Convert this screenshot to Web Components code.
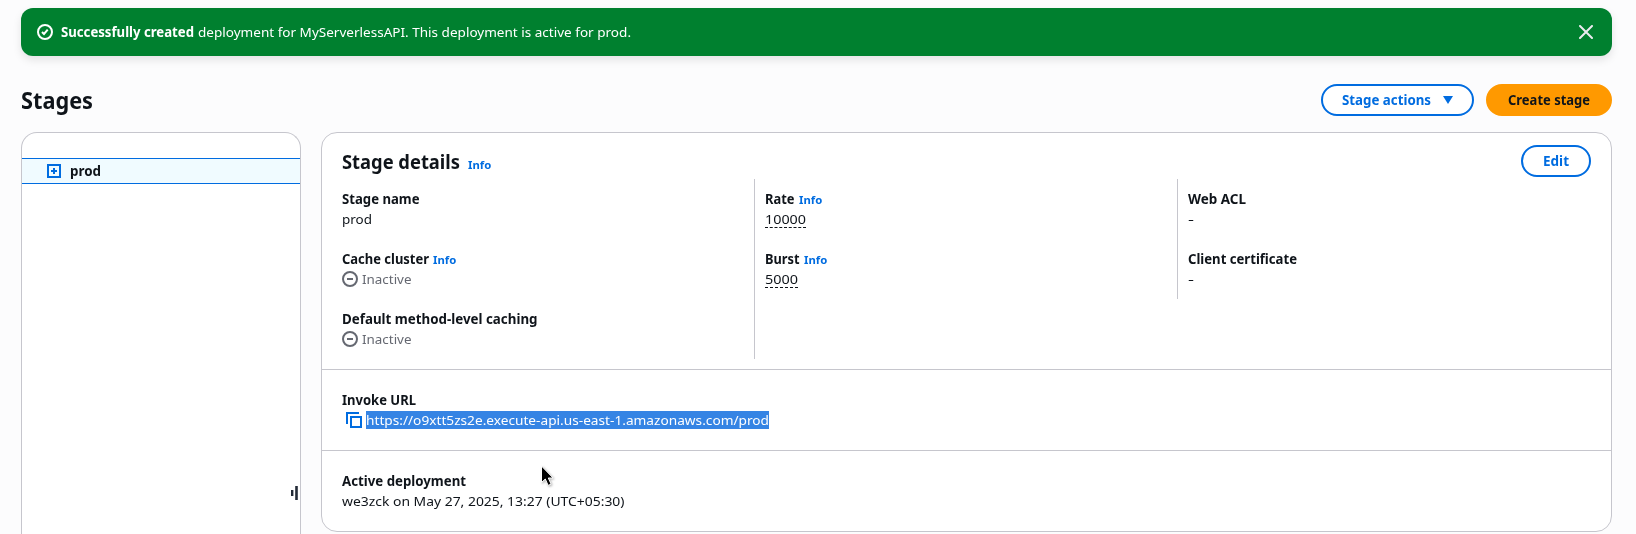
<!DOCTYPE html>
<html lang="en"><head><meta charset="utf-8"><title>Stages</title>
<style>
html,body{height:100%}
body{margin:0;background:#fcfcfd;overflow:hidden;font:13.3px/20px "Noto Sans","Open Sans",sans-serif;color:#0f141a}
</style></head><body><stages-page></stages-page>
<script>
const define=(name,html,after)=>customElements.define(name,class extends HTMLElement{
  constructor(){super();this.attachShadow({mode:'open'}).innerHTML=html;}
  connectedCallback(){if(after)after(this);}
});

/* One line of text; "w" is its advance width, reached by widening the glyphs. */
define('ui-text',`<style>:host{display:inline-block;white-space:nowrap}:host([b]){font-weight:700}span{display:inline-block;transform-origin:0 50%}</style><span><slot></slot></span>`,el=>{
  const w=+el.getAttribute('w');
  if(!w)return;
  const s=el.shadowRoot.querySelector('span');
  const natural=s.getBoundingClientRect().width;
  el.style.width=w+'px';
  s.style.transform='scaleX('+(w/natural).toFixed(4)+')';
});

define('info-link',`<style>:host{display:inline-block;font-size:11.3px;font-weight:700;color:#006ce0}</style><ui-text w="23.2">Info</ui-text>`);

define('ui-button',`<style>
:host{display:inline-flex;box-sizing:border-box;height:32px;border:2px solid #006ce0;border-radius:20px;padding:0 20px;align-items:center;color:#006ce0;background:#fff;font-weight:700}
:host([primary]){background:#f90;border-color:#f90;color:#0f141a}</style><slot></slot>`);

define('flash-bar',`<style>
:host{display:flex;align-items:center;box-sizing:border-box;height:48px;padding:0 19px 0 16px;border-radius:12px;background:#00802f;color:#fff;box-shadow:0 4px 8px rgba(0,7,22,.1)}
.msg{margin-left:8px;flex:1;display:flex;gap:4px}svg{display:block}</style>
<svg width="16" height="16" viewBox="0 0 16 16" fill="none" stroke="#fff" stroke-width="2"><circle cx="8" cy="8" r="7"/><path d="m5 8 2 2 3.7-4.3"/></svg>
<div class="msg"><ui-text b w="133">Successfully created</ui-text><ui-text w="433">deployment for MyServerlessAPI. This deployment is active for prod.</ui-text></div>
<svg width="14" height="14" viewBox="0 0 14 14" fill="none" stroke="#ebebf0" stroke-width="2" stroke-linecap="round"><path d="m1 1 12 12M13 1 1 13"/></svg>`);

define('page-header',`<style>
:host{display:flex;align-items:center;height:32px}
h1{margin:0;flex:1;font-size:23.5px;line-height:30px}
.actions{display:flex;gap:12px}
svg{margin-left:12px}</style>
<h1><ui-text w="72">Stages</ui-text></h1>
<div class="actions"><ui-button style="padding:0 19px"><ui-text w="89">Stage actions</ui-text><svg width="10" height="8" viewBox="0 0 10 8"><path d="M0 0h10L5 8z" fill="#006ce0"/></svg></ui-button><ui-button primary><ui-text w="82">Create stage</ui-text></ui-button></div>`);

define('stage-tree',`<style>
:host{display:flex;flex-direction:column;position:relative;box-sizing:border-box;border:1px solid #c6c6cd;border-bottom:0;border-radius:16px 16px 0 0;background:#fff;padding-top:25px}
.row{display:flex;align-items:center;gap:9px;box-sizing:border-box;height:26px;padding-left:25px;border:solid #006ce0;border-width:1px 0;background:#f0fbff}
.handle{position:absolute;right:1px;top:352px}svg{display:block}</style>
<div class="row"><svg width="14" height="14" viewBox="0 0 14 14" fill="none" stroke="#006ce0" stroke-width="2"><path d="M1 1h12v12H1zM7 4v6M4 7h6"/></svg><ui-text b w="31">prod</ui-text></div>
<svg class="handle" width="8" height="16" viewBox="0 0 8 16" fill="#232b37"><path d="M0 5h2.400v6H0zM4.200 1h2.600v14H4.200z"/></svg>`);

define('status-inactive',`<style>:host{display:flex;align-items:center;gap:4px;color:#656871}</style>
<svg width="16" height="16" viewBox="0 0 16 16" fill="none" stroke="#656871" stroke-width="2"><circle cx="8" cy="8" r="7"/><path d="M5 8h6"/></svg><ui-text w="49.5">Inactive</ui-text>`);

define('key-value',`<style>:host{display:block;height:40px}.k{display:flex;gap:4px;font-weight:700;height:20px;align-items:baseline}.v{display:flex;height:20px}</style>
<div class="k"><slot name="key"></slot></div><div class="v"><slot></slot></div>`);

define('stage-details',`<style>
:host{display:block;box-sizing:border-box;border:1px solid #c6c6cd;border-radius:16px;background:#fff}
header{display:flex;align-items:center;padding:12px 20px 0;height:32px}
h2{margin:0;padding-top:5px;flex:1;font-size:19.7px;line-height:24px;display:flex;gap:8px;align-items:baseline}
.cols{display:grid;grid-template-columns:412px 423px 1fr;align-items:start;padding:2px 20px 10px}
.col{display:flex;flex-direction:column;gap:20px;padding:10px 0 10px 10px;border-left:1px solid #c6c6cd}
.col:first-child{border:0;padding-left:0}
.col:nth-child(2){align-self:stretch}
section{border-top:1px solid #c6c6cd;padding:20px}
.dash{height:19px;line-height:20px;border-bottom:1px dashed #0f141a;box-sizing:border-box}
.url{background:#3584e4;color:#fff;height:18px;line-height:18px;margin-top:1px}
.copy{margin:2px 4px 0}
</style>
<header><h2><ui-text w="118">Stage details</ui-text><info-link></info-link></h2><ui-button><ui-text w="26">Edit</ui-text></ui-button></header>
<div class="cols">
<div class="col"><key-value><ui-text slot="key" w="77.5">Stage name</ui-text><ui-text w="30">prod</ui-text></key-value>
<key-value><ui-text slot="key" w="87">Cache cluster</ui-text><info-link slot="key"></info-link><status-inactive></status-inactive></key-value>
<key-value><ui-text slot="key" w="195.5">Default method-level caching</ui-text><status-inactive></status-inactive></key-value></div>
<div class="col"><key-value><ui-text slot="key" w="29.5">Rate</ui-text><info-link slot="key"></info-link><ui-text class="dash" w="41">10000</ui-text></key-value>
<key-value><ui-text slot="key" w="34.5">Burst</ui-text><info-link slot="key"></info-link><ui-text class="dash" w="33">5000</ui-text></key-value></div>
<div class="col"><key-value><ui-text slot="key" w="58">Web ACL</ui-text><ui-text w="6">-</ui-text></key-value>
<key-value><ui-text slot="key" w="109">Client certificate</ui-text><ui-text w="6">-</ui-text></key-value></div>
</div>
<section><key-value><ui-text slot="key" w="74">Invoke URL</ui-text><svg class="copy" width="16" height="16" viewBox="0 0 16 16" fill="none" stroke="#006ce0" stroke-width="2"><path d="M5 5h10v10H5zM1 12V1h12"/></svg><ui-text class="url" w="403">https://o9xtt5zs2e.execute-api.us-east-1.amazonaws.com/prod</ui-text></key-value></section>
<section><key-value><ui-text slot="key" w="124">Active deployment</ui-text><ui-text w="282.5">we3zck on May 27, 2025, 13:27 (UTC+05:30)</ui-text></key-value></section>`);

define('mouse-pointer',`<style>:host{position:absolute;left:540px;top:465px;filter:drop-shadow(1px 1px 1px rgba(0,0,0,.3))}svg{display:block}</style>
<svg width="16" height="24" viewBox="0 0 16 24"><path d="M1.500 1v16.500l3.800-3.500 2.800 6.400 3-1.300L8.300 13h4.800z" fill="#000" stroke="#fff"/></svg>`);

define('stages-page',`<style>
:host{display:flex;flex-direction:column;box-sizing:border-box;padding:8px 24px 0 21px;height:534px}
page-header{margin:28px 0 16px}
.body{flex:1;display:grid;grid-template-columns:280px 1fr;gap:20px}
stage-details{height:400px;align-self:start}
</style><flash-bar></flash-bar><page-header></page-header><div class="body"><stage-tree></stage-tree><stage-details></stage-details></div><mouse-pointer></mouse-pointer>`);
</script></body></html>
